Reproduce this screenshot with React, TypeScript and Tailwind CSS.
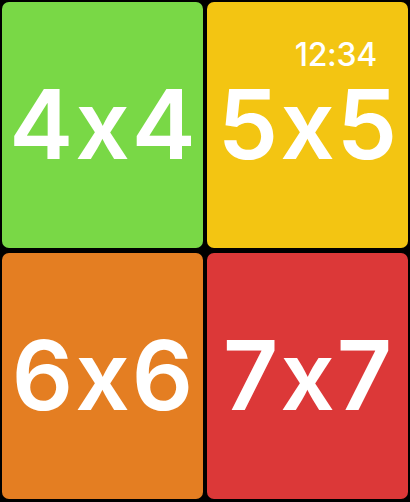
const tiles = [
  { label: '4x4', bg: 'bg-[#79d846]' },
  { label: '5x5', bg: 'bg-[#f3c512]', clock: true },
  { label: '6x6', bg: 'bg-[#e47e22]' },
  { label: '7x7', bg: 'bg-[#dc3838]' },
];

export default function App() {
  return (
    <div
      className="w-[410px] h-[502px] bg-black p-[2px] grid grid-cols-2 grid-rows-[246px_246px] gap-x-[4px] gap-y-[5px] overflow-hidden [font-feature-settings:'calt'_0]"
      style={{ fontFamily: 'Inter, "Noto Sans", sans-serif' }}
    >
      {tiles.map((t) => (
        <button
          key={t.label}
          className={`relative flex items-center justify-center rounded-[7px] ${t.bg} text-white`}
        >
          {t.clock && (
            <span className="absolute top-[40px] right-[31px] text-[32px] leading-[26px] font-medium tracking-[-0.3px]">
              12:34
            </span>
          )}
          <span className="text-[96px] leading-[74px] font-semibold tracking-[2px] pl-[2px] -mt-[2px]">
            {t.label}
          </span>
        </button>
      ))}
    </div>
  );
}
